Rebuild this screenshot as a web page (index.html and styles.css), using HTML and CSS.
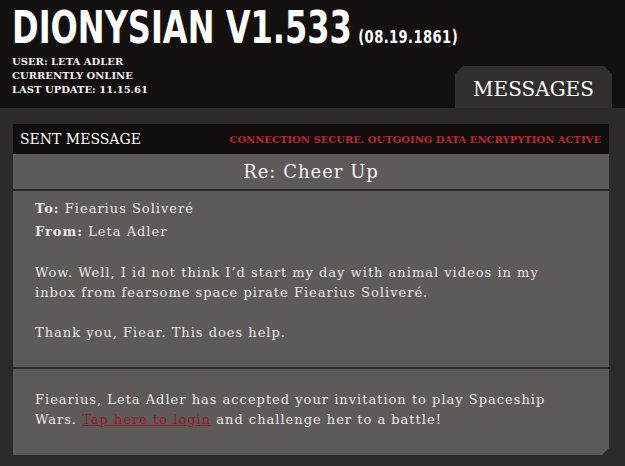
FILE: index.html
```html
<!DOCTYPE html>
<html lang="en">
<head>
  <meta charset="UTF-8" />
  <meta name="viewport" content="width=device-width, initial-scale=1.0"/>
  <title>Dionysian - Messages</title>
  <link rel="stylesheet" href="styles.css">
</head>
<body>

<header class="top">
  <div class="brand">
    <h1>DIONYSIAN V1.533 <small>(08.19.1861)</small></h1>
    <ul class="status">
      <li>USER: LETA ADLER</li>
      <li>CURRENTLY ONLINE</li>
      <li>LAST UPDATE: 11.15.61</li>
    </ul>
  </div>
  <nav class="tab">MESSAGES</nav>
</header>

<main class="stage">
  <section class="panel">
    <div class="bar">
      <span class="bar-title">SENT MESSAGE</span>
      <span class="secure">CONNECTION SECURE. OUTGOING DATA ENCRYPYTION ACTIVE</span>
    </div>

    <h2 class="subject">Re: Cheer Up</h2>

    <div class="message">
      <p class="meta"><b>To:</b> Fiearius Soliveré<br><b>From:</b> Leta Adler</p>
      <p>Wow. Well, I id not think I’d start my day with animal videos in my inbox from fearsome space pirate Fiearius Soliveré.</p>
      <p>Thank you, Fiear. This does help.</p>
    </div>

    <div class="notice">
      <p>Fiearius, Leta Adler has accepted your invitation to play Spaceship Wars. <a href="#">Tap here to login</a> and challenge her to a battle!</p>
    </div>
  </section>
</main>

</body>
</html>
```

FILE: styles.css
```css
body {
  margin: 0;
  background: #2e2a2a;
  font-family: 'DejaVu Serif', serif;
  color: #ebe7e6;
}

.top {
  height: 108px;
  background: #141010;
  display: flex;
  justify-content: space-between;
  align-items: flex-end;
}

.brand {
  flex: 1;
  min-width: 0;
  align-self: flex-start;
  padding: 10px 0 0 12px;
  white-space: nowrap;
}

.brand h1 {
  margin: 0;
  font-family: 'DejaVu Sans Condensed', 'DejaVu Sans', sans-serif;
  font-weight: bold;
  font-size: 44px;
  line-height: 36px;
  color: #fff;
  transform: scaleX(0.81);
  transform-origin: left center;
}

.brand h1 small {
  font-size: 18px;
  letter-spacing: 0.5px;
  margin-left: -6px;
}

.status {
  list-style: none;
  margin: 0;
  padding: 0;
  font-size: 10px;
  font-weight: bold;
  line-height: 14px;
  color: #f2f0f0;
}

.tab {
  flex-shrink: 0;
  width: 157px;
  height: 42px;
  margin-right: 13px;
  background: #332f2f;
  clip-path: polygon(8px 0, calc(100% - 8px) 0, 100% 8px, 100% 100%, 0 100%, 0 8px);
  font-size: 20px;
  line-height: 46px;
  text-align: center;
  color: #fff;
}

.stage {
  padding: 16px 16px 14px 13px;
}

.panel {
  width: 596px;
  background: #5e5a5a;
  clip-path: polygon(0 0, 100% 0, 100% calc(100% - 7px), calc(100% - 7px) 100%, 0 100%);
}

.bar {
  height: 30px;
  background: #110d0d;
  display: flex;
  justify-content: space-between;
  align-items: center;
  padding: 0 8px 0 7px;
}

.bar-title {
  font-size: 14px;
  color: #fff;
}

.secure {
  font-size: 10px;
  font-weight: bold;
  color: #c1272b;
}

.subject {
  margin: 0;
  height: 35px;
  border-bottom: 2px solid #2a2626;
  font-size: 18px;
  font-weight: normal;
  line-height: 36px;
  letter-spacing: 1px;
  text-align: center;
  color: #f3f1f1;
}

.message,
.notice {
  padding: 6px 44px 24px 22px;
  font-size: 13px;
  line-height: 20px;
  letter-spacing: 1px;
}

.message p,
.notice p {
  margin: 20px 0 0;
}

.message .meta {
  margin-top: 0;
  line-height: 23px;
}

.notice {
  border-top: 2px solid #2f2b2b;
  padding-top: 1px;
  padding-bottom: 25px;
}

.notice a {
  color: #8e1e22;
}
```
